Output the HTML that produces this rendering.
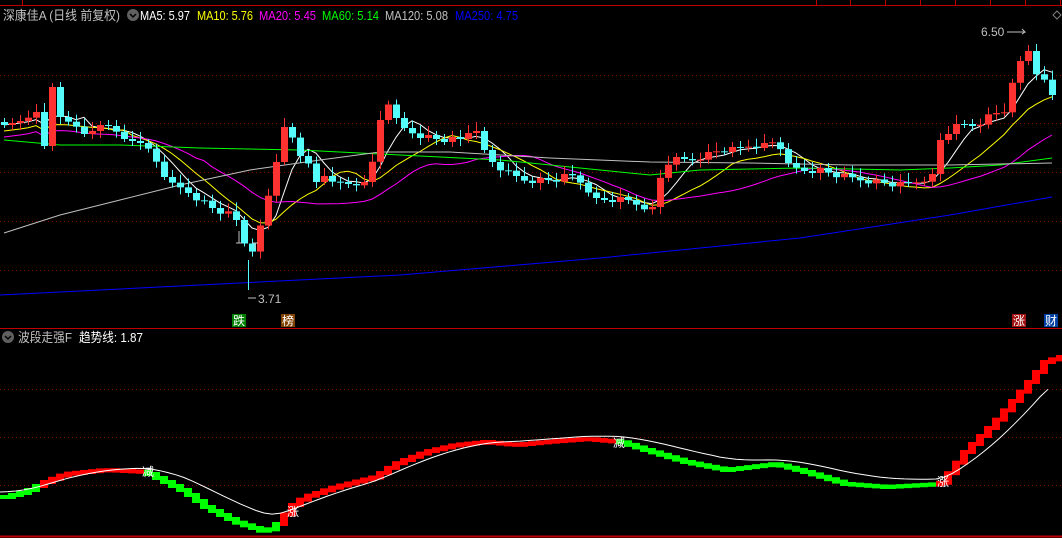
<!DOCTYPE html>
<html><head><meta charset="utf-8"><style>
html,body{margin:0;padding:0;background:#000;width:1062px;height:538px;overflow:hidden}
svg{display:block}
text{font-family:"Liberation Sans","Noto Sans CJK SC",sans-serif;font-size:12px}
.h{font-size:13px}
</style></head><body>
<svg id="s" width="1062" height="538" xmlns="http://www.w3.org/2000/svg">
<rect width="1062" height="538" fill="#000"/>
<line x1="0" y1="5.5" x2="1062" y2="5.5" stroke="#c00000"/>
<g stroke="#c00000" stroke-width="1">
<line x1="22.5" y1="0" x2="22.5" y2="5"/><line x1="816.5" y1="0" x2="816.5" y2="5"/><line x1="850.5" y1="0" x2="850.5" y2="5"/><line x1="885.5" y1="0" x2="885.5" y2="5"/><line x1="920.5" y1="0" x2="920.5" y2="5"/><line x1="955.5" y1="0" x2="955.5" y2="5"/><line x1="990.5" y1="0" x2="990.5" y2="5"/><line x1="1025.5" y1="0" x2="1025.5" y2="5"/><line x1="1060.5" y1="0" x2="1060.5" y2="5"/>
</g>
<g id="grid" stroke="#800000" stroke-dasharray="1,3"></g>
<g id="ma"></g>
<g id="c"></g>
<g id="b"></g>
<text class="h" x="3" y="20" fill="#c0c0c0" textLength="117" lengthAdjust="spacingAndGlyphs">深康佳A (日线 前复权)</text>
<circle cx="133" cy="15" r="6" fill="#606060"/><path d="M130 14 l3 3 l3 -3" stroke="#000" fill="none" stroke-width="1.5"/>
<text class="h" x="140" y="20" fill="#fff" textLength="50" lengthAdjust="spacingAndGlyphs">MA5: 5.97</text>
<text class="h" x="197" y="20" fill="#ff0" textLength="56" lengthAdjust="spacingAndGlyphs">MA10: 5.76</text>
<text class="h" x="259" y="20" fill="#f0f" textLength="57" lengthAdjust="spacingAndGlyphs">MA20: 5.45</text>
<text class="h" x="322" y="20" fill="#0f0" textLength="57" lengthAdjust="spacingAndGlyphs">MA60: 5.14</text>
<text class="h" x="385" y="20" fill="#c0c0c0" textLength="63" lengthAdjust="spacingAndGlyphs">MA120: 5.08</text>
<text class="h" x="455" y="20" fill="#00f" textLength="63" lengthAdjust="spacingAndGlyphs">MA250: 4.75</text>
<path d="M1053 15 l4 -4 l4 4 l-4 4z" stroke="#808080" fill="none"/>
<text x="981" y="36" fill="#c0c0c0">6.50</text>
<path d="M1007 32 h18 l-3 -3 M1025 32 l-3 2" stroke="#c0c0c0" fill="none"/>
<text x="258" y="303" fill="#c0c0c0">3.71</text>
<path d="M248 298 h8" stroke="#c0c0c0"/>
<rect x="232" y="314" width="14" height="13" fill="#008000"/><text x="233" y="325" fill="#fff">跌</text>
<rect x="281" y="314" width="14" height="13" fill="#804000"/><text x="282" y="325" fill="#fff">榜</text>
<rect x="1012" y="314" width="14" height="13" fill="#a01010"/><text x="1013" y="325" fill="#fff">涨</text>
<rect x="1044" y="314" width="14" height="13" fill="#0040a0"/><text x="1045" y="325" fill="#fff">财</text>
<line x1="0" y1="328.5" x2="1062" y2="328.5" stroke="#c00000"/>
<circle cx="8" cy="337" r="6" fill="#606060"/><path d="M5 336 l3 3 l3 -3" stroke="#000" fill="none" stroke-width="1.5"/>
<text class="h" x="18" y="342" fill="#c0c0c0" textLength="54" lengthAdjust="spacingAndGlyphs">波段走强F</text>
<text class="h" x="79" y="342" fill="#fff" textLength="64" lengthAdjust="spacingAndGlyphs">趋势线: 1.87</text>
<line x1="0" y1="536.5" x2="1062" y2="536.5" stroke="#c00000" stroke-width="2"/>
<text x="142" y="476" fill="#fff">减</text>
<text x="613" y="447" fill="#fff">减</text>
<text x="287" y="516" fill="#fff">涨</text>
<text x="937" y="486" fill="#fff">涨</text>
</svg>
<script>
var NS="http://www.w3.org/2000/svg",s=document.getElementById('s');
function el(p,t,a){var e=document.createElementNS(NS,t);for(var k in a)e.setAttribute(k,a[k]);p.appendChild(e);return e;}
var g=document.getElementById('grid');
[75,123,172,221,270,389,437,485].forEach(function(y){el(g,'line',{x1:0,y1:y+.5,x2:1062,y2:y+.5});});
function interp(P,x){for(var i=1;i<P.length;i++){if(x<=P[i][0]){var a=P[i-1],b=P[i];return a[1]+(b[1]-a[1])*(x-a[0])/(b[0]-a[0]);}}return P[P.length-1][1];}
var CP=[[0,130],[20,120],[35,110],[45,150],[52,85],[60,120],[75,125],[90,135],[105,120],[120,140],[140,140],[155,160],[170,185],[185,190],[200,200],[215,210],[230,215],[240,225],[248,260],[255,240],[265,215],[272,170],[280,150],[288,110],[295,160],[305,150],[315,185],[325,175],[340,185],[355,185],[370,175],[378,130],[385,95],[395,120],[405,130],[420,135],[440,140],[460,140],[475,125],[485,155],[495,165],[510,175],[525,180],[540,180],[555,180],[570,175],[585,185],[595,200],[610,200],[625,200],[640,205],[655,210],[662,165],[675,160],[690,160],[705,155],[720,150],[735,150],[750,145],[765,145],[778,140],[785,165],[800,170],[820,170],[835,175],[850,178],[865,180],[880,182],[895,185],[905,185],[920,180],[935,175],[940,140],[950,130],[960,125],[975,125],[990,115],[1005,110],[1018,65],[1028,50],[1035,70],[1043,80],[1052,95]];
var C=[],X=[];for(var i=0;i<132;i++){var x=4+8*i;X.push(x);C.push(interp(CP,x)+((i*37)%7-3));}
var cg=document.getElementById('c');
for(var i=0;i<C.length;i++){var o=i?C[i-1]:C[0]-3,c=C[i],up=c<o;var t=Math.min(o,c),b=Math.max(o,c);if(b-t<1)b=t+1;
var col=up?'#ff3232':'#54fcfc';el(cg,'line',{x1:X[i]+.5,y1:t-4-(i*13)%6,x2:X[i]+.5,y2:b+3+(i*7)%5,stroke:col});
el(cg,'rect',{x:X[i]-3,y:t,width:7,height:b-t,fill:col});}
el(cg,'line',{x1:248.5,y1:260,x2:248.5,y2:290,stroke:'#54fcfc'});
el(cg,'path',{d:'M236 243h6M239 243v-12M252 243h6M255 243v6',stroke:'#c0c0c0',fill:'none'});
var mg=document.getElementById('ma');
function ma(n,col){var pts=[];for(var i=0;i<C.length;i++){var s0=0,k=0;for(var j=Math.max(0,i-n+1);j<=i;j++){s0+=C[j];k++;}pts.push(X[i]+','+(s0/k+(n>=20?12:n>=10?6:0)).toFixed(1));}el(mg,'polyline',{points:pts.join(' '),fill:'none',stroke:col});}
ma(5,'#fff');ma(10,'#ff0');ma(20,'#f0f');
el(mg,'polyline',{points:'4,140 60,145 120,145 200,148 300,150 400,155 500,160 600,170 650,175 700,170 800,168 900,170 950,168 1000,165 1052,158',fill:'none',stroke:'#0f0'});
el(mg,'polyline',{points:'4,233 60,215 120,200 180,185 250,170 320,160 380,152 450,152 550,158 650,162 750,163 850,165 950,165 1052,163',fill:'none',stroke:'#c0c0c0'});
el(mg,'polyline',{points:'0,295 200,285 400,275 600,258 800,238 950,215 1052,197',fill:'none',stroke:'#0000ff'});
var BP=[[0,495],[20,490],[40,480],[60,472],[100,468],[140,470],[160,480],[180,490],[200,505],[230,520],[260,530],[275,520],[285,505],[300,495],[330,485],[370,475],[390,462],[420,450],[450,443],[480,440],[510,443],[540,440],[580,437],[615,440],[640,448],[680,460],[720,468],[770,462],[800,470],[840,482],[880,485],[935,482],[945,470],[960,450],[990,420],[1020,385],[1040,360],[1055,355],[1062,355]];
var bg=document.getElementById('b'),V=[];for(var x=0;x<=1056;x+=8)V.push(interp(BP,x));
function green(x){return x<40||(x>=144&&x<280)||(x>=616&&x<936);}
for(var i=0;i<V.length;i++){var p=i?V[i-1]:V[0],v=V[i];var t=Math.min(p,v),bt=Math.max(p,v)+4;el(bg,'rect',{x:i*8,y:t,width:8,height:bt-t,fill:green(i*8)?'#00ff00':'#ff0000'});}
var W=[],e=V[0];for(var i=0;i<V.length;i++){e=e+(V[i]-e)*0.18;W.push((i*8)+','+(e-3).toFixed(1));}
el(bg,'polyline',{points:W.slice(0,132).join(' '),fill:'none',stroke:'#fff'});
</script>
</body></html>
